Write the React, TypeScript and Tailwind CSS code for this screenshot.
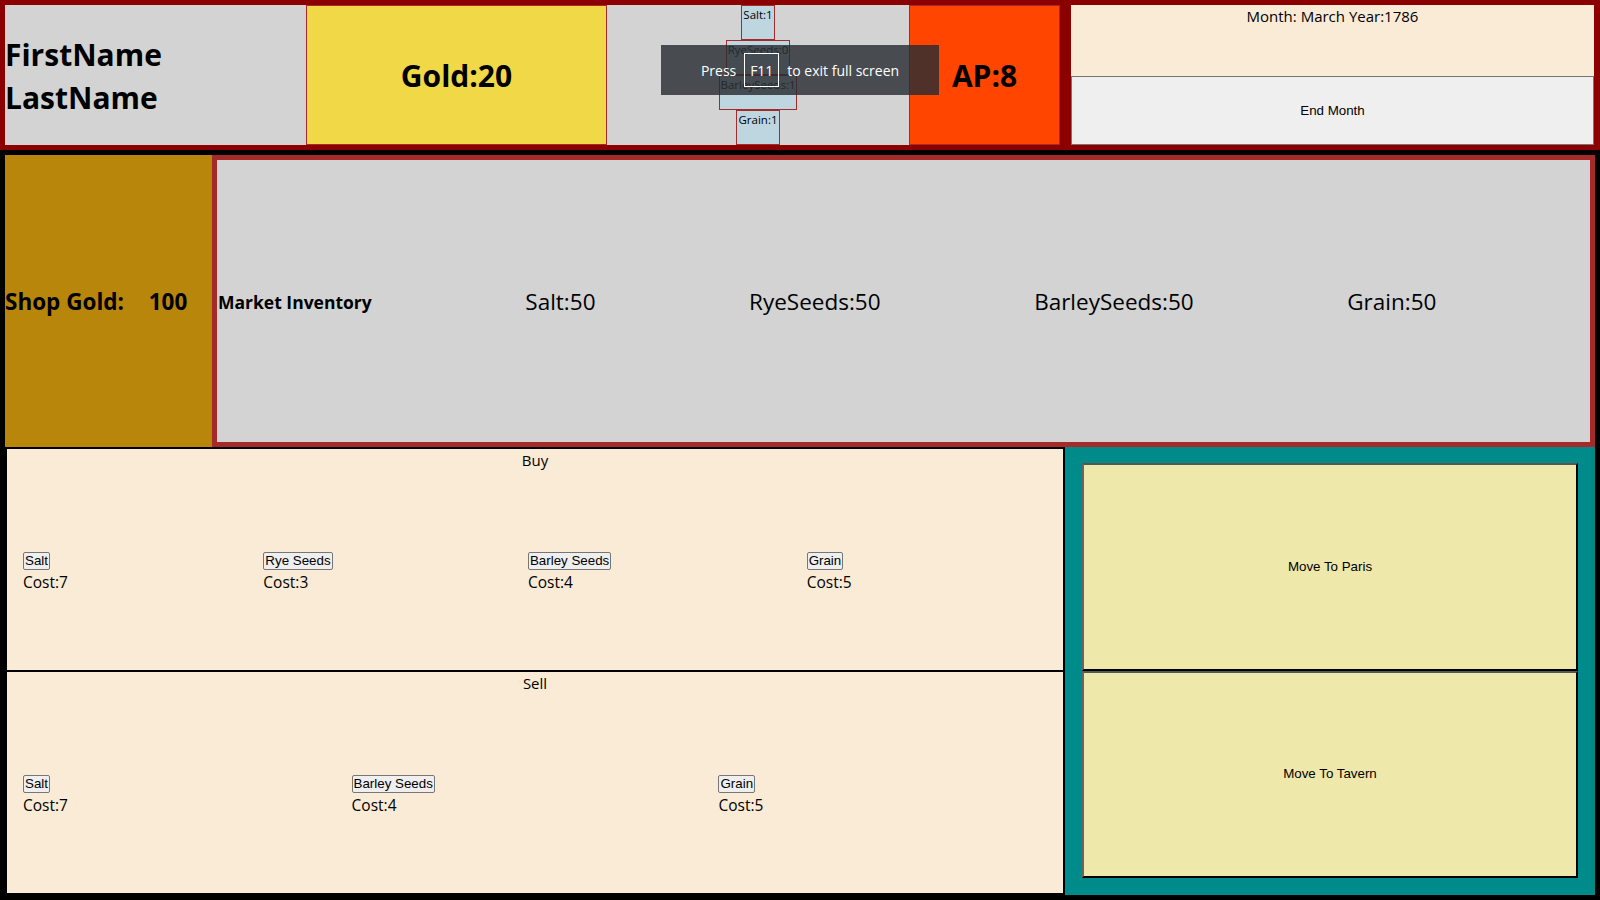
import React from "react";

const inv = ["Salt:1", "RyeSeeds:0", "BarleySeeds:1", "Grain:1"];
const buyItems = [
  { name: "Salt", cost: 7 },
  { name: "Rye Seeds", cost: 3 },
  { name: "Barley Seeds", cost: 4 },
  { name: "Grain", cost: 5 },
];
const sellItems = [
  { name: "Salt", cost: 7 },
  { name: "Barley Seeds", cost: 4 },
  { name: "Grain", cost: 5 },
];

function Panel({ title, items }: { title: string; items: { name: string; cost: number }[] }) {
  return (
    <div className="h-[221px] flex flex-col">
      <div className="text-center text-[15px] leading-[21px] pt-[1px]">{title}</div>
      <div className="flex-1 flex items-center px-[16px] pt-[4px]">
        {items.map((it) => (
          <div key={it.name} className="flex-auto flex flex-col items-start">
            <button className="h-[18px] px-px bg-[#efefef] border border-[#767676] rounded-[2px] font-['Liberation_Sans',Arial,sans-serif] text-[13.33px] leading-[16px] text-black">
              {it.name}
            </button>
            <div className="text-[15.5px] leading-[22px] mt-[1px]">Cost:{it.cost}</div>
          </div>
        ))}
      </div>
    </div>
  );
}

export default function App() {
  return (
    <div className="relative w-[1600px] h-[900px] bg-black font-['Open_Sans',sans-serif] text-black overflow-hidden">
      {/* Top bar */}
      <div className="h-[150px] bg-[#8b0000] flex py-[5px] pl-[5px]">
        <div className="w-[301px] bg-[#d3d3d3] flex flex-col justify-center text-[30px] font-bold leading-[43px] pt-[1px]">
          <div>FirstName</div>
          <div>LastName</div>
        </div>
        <div className="w-[301px] bg-[#f1d846] border border-[#a52a2a] flex items-center justify-center text-[30px] font-bold">
          Gold:20
        </div>
        <div className="w-[302px] bg-[#d3d3d3] flex flex-col items-center">
          {inv.map((i) => (
            <div key={i} className="h-[35px] border border-[#a52a2a] bg-[#bed6e0] text-[11.5px] leading-[18px] px-px">
              {i}
            </div>
          ))}
        </div>
        <div className="w-[151px] bg-[#ff4500] border border-[#a52a2a] flex items-center justify-center text-[30px] font-bold">
          AP:8
        </div>
        <div className="ml-[11px] w-[523px] flex flex-col">
          <div className="h-[71px] bg-[#faebd7] text-center text-[15px] leading-[22px]">Month: March Year:1786</div>
          <button className="flex-1 bg-[#efefef] border border-[#767676] font-['Liberation_Sans',Arial,sans-serif] text-[13.33px] text-black">
            End Month
          </button>
        </div>
      </div>

      {/* Market row */}
      <div className="mt-[5px] mx-[5px] h-[292px] flex">
        <div className="w-[207px] bg-[#b8860b] flex items-center text-[22.5px] font-bold pt-[2px]">
          <span className="flex-auto">Shop Gold:</span>
          <span className="flex-auto">100</span>
        </div>
        <div className="flex-1 border-[5px] border-[#a52a2a] bg-[#d3d3d3] flex items-center pl-px pt-[2px]">
          <span className="flex-auto text-[17.5px] font-bold">Market Inventory</span>
          <span className="flex-auto text-[22.5px]">Salt:50</span>
          <span className="flex-auto text-[22.5px]">RyeSeeds:50</span>
          <span className="flex-auto text-[22.5px]">BarleySeeds:50</span>
          <span className="flex-auto text-[22.5px]">Grain:50</span>
        </div>
      </div>

      {/* Bottom */}
      <div className="mx-[5px] h-[448px] flex">
        <div className="w-[1060px] border-2 border-black bg-[#faebd7] flex flex-col">
          <Panel title="Buy" items={buyItems} />
          <div className="h-[2px] bg-black" />
          <Panel title="Sell" items={sellItems} />
        </div>
        <div className="flex-1 bg-[#008b8b] pt-[16px] pb-[17px] px-[17px] flex flex-col">
          <button className="flex-1 bg-[#eee8aa] border-2 border-t-[#555555] border-l-[#666666] border-r-black border-b-black font-['Liberation_Sans',Arial,sans-serif] text-[13.33px] text-black">
            Move To Paris
          </button>
          <button className="flex-1 bg-[#eee8aa] border-2 border-t-[#555555] border-l-[#666666] border-r-black border-b-black font-['Liberation_Sans',Arial,sans-serif] text-[13.33px] text-black">
            Move To Tavern
          </button>
        </div>
      </div>

      {/* Fullscreen notice overlay */}
      <div className="absolute left-[661px] top-[45px] w-[278px] h-[50px] bg-[rgba(42,45,50,0.82)] flex items-center justify-center gap-[8px] text-white text-[14px]">
        <span>Press</span>
        <span className="w-[35px] h-[34px] border-[1.5px] border-white flex items-center justify-center">F11</span>
        <span>to exit full screen</span>
      </div>
    </div>
  );
}
